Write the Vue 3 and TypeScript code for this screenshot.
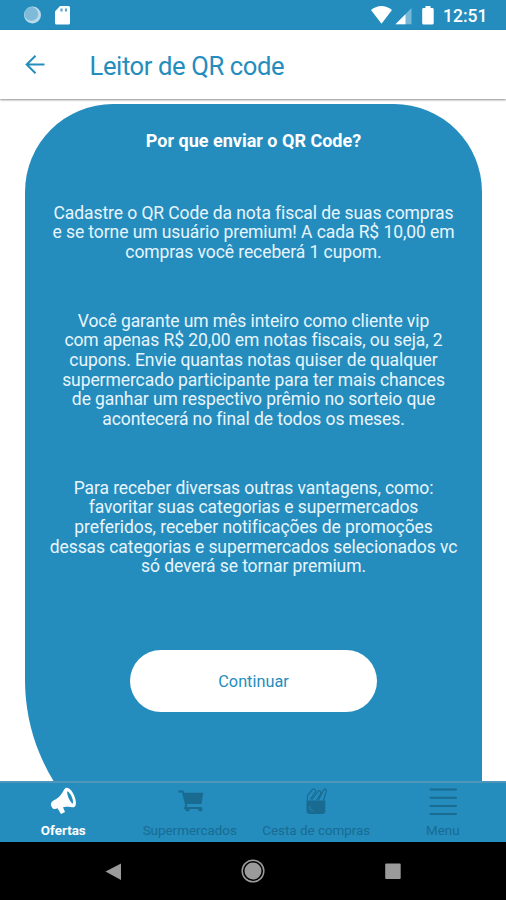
<script setup lang="ts">
const paragraphs: string[][] = [
  [
    'Cadastre o QR Code da nota fiscal de suas compras',
    'e se torne um usuário premium! A cada R$ 10,00 em',
    'compras você receberá 1 cupom.',
  ],
  [
    'Você garante um mês inteiro como cliente vip',
    'com apenas R$ 20,00 em notas fiscais, ou seja, 2',
    'cupons. Envie quantas notas quiser de qualquer',
    'supermercado participante para ter mais chances',
    'de ganhar um respectivo prêmio no sorteio que',
    'acontecerá no final de todos os meses.',
  ],
  [
    'Para receber diversas outras vantagens, como:',
    'favoritar suas categorias e supermercados',
    'preferidos, receber notificações de promoções',
    'dessas categorias e supermercados selecionados vc',
    'só deverá se tornar premium.',
  ],
]
</script>

<template>
  <div class="screen">
    <div class="status">
      <svg class="status-left" width="60" height="30" viewBox="0 0 60 30">
        <circle cx="12.500" cy="15" r="8.500" fill="#b9dbeb" />
        <circle cx="11.300" cy="13.900" r="6.900" fill="#7fbbd9" />
        <path d="M40 6h8.500a1.500 1.500 0 0 1 1.500 1.500v15.500a1.500 1.500 0 0 1-1.500 1.500H36.500a1.500 1.500 0 0 1-1.500-1.500V11.500z" fill="#fff" />
        <path d="M41.500 8.500v3M46 8.500v3" stroke="#5ba9cd" stroke-width="2.200" />
      </svg>
      <svg class="status-right" width="66" height="30" viewBox="0 0 66 30">
        <path d="M1 10Q11.500 2 22 10L11.500 23.800z" fill="#fff" />
        <path d="M41.500 8v16.300H25.500z" fill="#75b8d7" />
        <path d="M35.500 14.200v10.100h-10z" fill="#fff" />
        <path d="M55.500 6h5v2h1.800a1.400 1.400 0 0 1 1.400 1.400V23a1.500 1.500 0 0 1-1.500 1.500h-8.500a1.500 1.500 0 0 1-1.500-1.500V9.400A1.400 1.400 0 0 1 53.600 8h1.900z" fill="#fff" />
      </svg>
      <span class="clock">12:51</span>
    </div>
    <header class="bar">
      <svg class="back" width="20" height="20" viewBox="0 0 20 20" fill="none" stroke="#248dbd" stroke-width="2">
        <path d="M19.500 9.500H2M10.500 0.800L1.700 9.500L10.500 18.200" />
      </svg>
      <h1>Leitor de QR code</h1>
    </header>
    <main>
      <section class="card">
        <h2>Por que enviar o QR Code?</h2>
        <p v-for="(lines, i) in paragraphs" :key="i">
          <span v-for="line in lines" :key="line">{{ line }}</span>
        </p>
        <button type="button">Continuar</button>
      </section>
    </main>
    <nav class="tabs">
      <div class="tab active">
        <svg width="30" height="30" viewBox="0 0 30 30">
          <path fill-rule="evenodd" d="M17.300 2.300C19 1.200 21.500 2 24 5.500C27.200 10.500 29.300 17.500 27 20.600C25.800 21.900 22 20.400 18 20.700L15 21.300L17 26L13 28L9.500 22.300C6.500 24 4.500 22.800 3.500 20.500C2.200 17.500 3.300 15.500 6.500 14C14 10.500 14.700 4.500 17.300 2.300zM19.300 5.200C18.500 8 21.500 15.300 24.800 17.800C26 14.500 22.900 6.800 19.300 5.200z" fill="currentColor" />
        </svg>
        <span>Ofertas</span>
      </div>
      <div class="tab">
        <svg width="30" height="30" viewBox="0 0 30 30">
          <path d="M3.500 5.500H7.700L11.300 19.500L10 22H26" fill="none" stroke="currentColor" stroke-width="1.800" />
          <path d="M8.500 6.800H28.300L26.500 18H11.300z" fill="currentColor" />
          <circle cx="12.500" cy="23.200" r="2.200" fill="currentColor" />
          <circle cx="25.300" cy="23.200" r="2.200" fill="currentColor" />
        </svg>
        <span>Supermercados</span>
      </div>
      <div class="tab">
        <svg width="30" height="30" viewBox="0 0 30 30">
          <path d="M5.500 14.500H24.300V25a3 3 0 0 1-3 3H8.500A3 3 0 0 1 5.500 25z" fill="currentColor" />
          <path d="M6.500 14.500V9.500L11 4Q13.500 1.500 15 5L9.500 13M10.500 14L18 4.500Q20.500 5 19.500 8L15.500 14M17.500 14L22.500 4Q25.500 1.500 25.300 5L22.500 14.500" fill="none" stroke="currentColor" stroke-width="1.200" />
          <path d="M8.500 20.500L9.500 23.500L12.500 25" fill="none" stroke="#248dbd" stroke-width="0.800" />
        </svg>
        <span>Cesta de compras</span>
      </div>
      <div class="tab">
        <svg width="30" height="30" viewBox="0 0 30 30">
          <path d="M2.500 3.500H28M2.500 11.800H28M2.500 20H28M2.500 28H28" fill="none" stroke="currentColor" stroke-width="2" stroke-linecap="round" />
        </svg>
        <span>Menu</span>
      </div>
    </nav>
    <footer>
      <svg width="24" height="24" viewBox="0 0 24 24"><path d="M4.500 12.500L20 4.500V21z" fill="#9a9a9a" /></svg>
      <svg width="24" height="24" viewBox="0 0 24 24">
        <circle cx="12" cy="12" r="10.800" fill="none" stroke="#9a9a9a" stroke-width="1.500" />
        <circle cx="12" cy="12" r="8.500" fill="#9a9a9a" />
      </svg>
      <svg width="24" height="24" viewBox="0 0 24 24"><rect x="4.200" y="4.500" width="15.500" height="15.500" rx="1" fill="#9a9a9a" /></svg>
    </footer>
  </div>
</template>

<style>
body {
  margin: 0;
}
</style>

<style scoped>
.screen {
  width: 506px;
  height: 900px;
  display: flex;
  flex-direction: column;
  overflow: hidden;
  background: #fff;
  color: #248dbd;
  font-family: Roboto, "Liberation Sans", sans-serif;
}
.status {
  flex: none;
  height: 30px;
  display: flex;
  align-items: center;
  background: #248dbd;
  color: #fff;
}
.status-left {
  margin-left: 20px;
}
.status-right {
  margin-left: 290px;
}
.clock {
  margin-left: 7px;
  padding-top: 2px;
  font-size: 17.5px;
  font-weight: 500;
  line-height: 28px;
}
.bar {
  position: relative;
  z-index: 1;
  flex: none;
  height: 69px;
  display: flex;
  align-items: center;
  box-shadow: 0 1px 2px rgba(0, 0, 0, 0.45);
  background: #fff;
}
.back {
  margin-left: 25px;
}
h1 {
  margin: 2px 0 0 44.5px;
  font-size: 25.6px;
  letter-spacing: -0.4px;
  font-weight: 400;
  line-height: 32px;
}
main {
  flex: 1;
  min-height: 0;
  overflow: hidden;
  padding: 5px 24px 0 25px;
}
.card {
  height: 769px;
  display: flex;
  flex-direction: column;
  align-items: center;
  border-radius: 88px 88px 0 193px;
  background: #248dbd;
  color: #fff;
}
h2 {
  margin: 26px 0 0;
  font-size: 18px;
  font-weight: 700;
  line-height: 22px;
}
p {
  margin: 51.5px 0 0;
  font-size: 17.5px;
  letter-spacing: -0.08px;
  line-height: 19.6px;
  color: #e8f5fd;
}
p + p {
  margin-top: 49.5px;
}
p span {
  display: block;
  white-space: nowrap;
  text-align: center;
}
button {
  width: 247px;
  height: 62px;
  margin-top: 73.5px;
  padding: 1px 0 0;
  border: 0;
  border-radius: 31px;
  background: #fff;
  color: #248dbd;
  font: 400 16.3px Roboto, "Liberation Sans", sans-serif;
}
.tabs {
  flex: none;
  height: 61px;
  box-sizing: border-box;
  border-top: 2px solid #4e97bb;
  display: grid;
  grid-template-columns: repeat(4, 1fr);
  background: #248dbd;
  color: #196b91;
}
.tab {
  display: flex;
  flex-direction: column;
  align-items: center;
  padding-top: 3px;
  font-size: 13.4px;
}
.tab span {
  margin-top: 7px;
  line-height: 16px;
  white-space: nowrap;
}
.active {
  color: #fff;
  font-weight: 700;
}
footer {
  flex: none;
  height: 58px;
  display: flex;
  justify-content: center;
  align-items: center;
  gap: 116px;
  background: #000;
}
</style>
